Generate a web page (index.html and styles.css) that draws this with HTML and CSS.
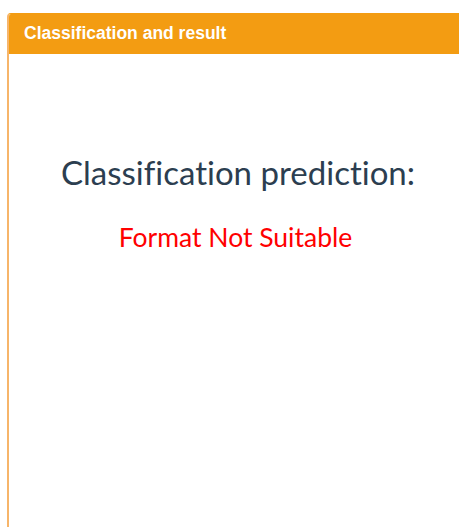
FILE: index.html
```html
<!DOCTYPE html>
<html lang="en">
<head>
<meta charset="utf-8">
<title>Classification and result</title>
<link rel="stylesheet" href="styles.css">
</head>
<body>
  <section class="panel">
    <header class="panel-heading">Classification and result</header>
    <div class="panel-body">
      <h2 class="prediction-title">Classification prediction:</h2>
      <p class="prediction-value">Format Not Suitable</p>
    </div>
  </section>
</body>
</html>
```
FILE: styles.css
```css
html, body {
  margin: 0;
  padding: 0;
  background: #ffffff;
  overflow: hidden;
}

body {
  padding: 13px 0 0 7px;
  height: 527px;
  box-sizing: border-box;
}

.panel {
  width: 461px;
  height: 540px;
  border: 1px solid #f39c12;
  border-left: 2px solid #f7b56a;
  border-radius: 4px;
  background: #ffffff;
  box-sizing: border-box;
  overflow: hidden;
}

.panel-heading {
  background: #f39c12;
  color: #ffffff;
  font-family: "Liberation Sans", Arial, sans-serif;
  font-weight: bold;
  font-size: 17.5px;
  line-height: 20px;
  padding: 9px 15px 11px;
}

.panel-body {
  font-family: Lato, "Open Sans", sans-serif;
  text-align: center;
  padding-top: 98px;
  font-variant-ligatures: none;
}

.prediction-title {
  margin: 0;
  font-weight: normal;
  font-size: 33px;
  line-height: 40px;
  color: #2c3e50;
}

.prediction-value {
  margin: 29px 0 0;
  padding-right: 5px;
  font-size: 26.5px;
  line-height: 32px;
  color: #ff0000;
}
```
